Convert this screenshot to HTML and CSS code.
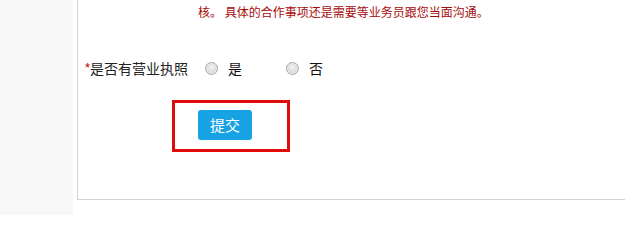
FILE: index.html
```html
<!DOCTYPE html>
<html lang="zh-CN">
<head>
<meta charset="utf-8">
<title>提交</title>
<link rel="stylesheet" href="styles.css">
</head>
<body>
<div class="page">
  <div class="sidebar"></div>
  <div class="main">
    <div class="panel">
      <p class="notice">核。 具体的合作事项还是需要等业务员跟您当面沟通。</p>
      <div class="field">
        <span class="req">*</span><span class="label">是否有营业执照</span>
        <label class="opt opt-first"><span class="radio"></span><span class="opt-text">是</span></label>
        <label class="opt opt-second"><span class="radio"></span><span class="opt-text">否</span></label>
      </div>
      <div class="highlight">
        <button class="submit" type="button">提交</button>
      </div>
    </div>
  </div>
</div>
</body>
</html>
```
FILE: styles.css
```css
html, body {
  margin: 0;
  padding: 0;
  background: #ffffff;
}
body {
  font-family: "Noto Sans CJK SC", "Liberation Sans", sans-serif;
  color: #222222;
}
.page {
  display: flex;
  width: 625px;
  height: 215px;
  overflow: hidden;
}
.sidebar {
  width: 73px;
  flex: none;
  background: #f8f8f8;
}
.main {
  flex: 1;
  padding-left: 4px;
  background: #ffffff;
}
.panel {
  height: 200px;
  box-sizing: border-box;
  border-left: 1px solid #d2d2d2;
  border-bottom: 1px solid #d2d2d2;
  padding-top: 4px;
}
.notice {
  margin: 0 0 0 120px;
  font-size: 12px;
  line-height: 16px;
  height: 16px;
  color: #a50b0b;
  white-space: nowrap;
}
.field {
  display: flex;
  align-items: center;
  height: 24px;
  margin-top: 36px;
  margin-left: 7px;
  font-size: 14px;
  line-height: 24px;
}
.req {
  font-family: "Liberation Sans", sans-serif;
  color: #c40000;
  font-size: 13px;
  line-height: 13px;
  align-self: flex-start;
  margin-top: 5px;
  width: 5px;
}
.label {
  color: #222222;
}
.opt {
  display: flex;
  align-items: center;
}
.opt-first {
  margin-left: 17px;
}
.opt-second {
  margin-left: 44px;
}
.radio {
  width: 11px;
  height: 11px;
  border-radius: 50%;
  border: 1px solid #a8a8a8;
  background: radial-gradient(circle at 50% 40%, #f4f4f4 0%, #dcdcdc 55%, #c4c4c4 100%);
  box-shadow: inset 0 0 0 1px #ececec;
  margin-top: 1px;
}
.opt-text {
  margin-left: 10px;
  color: #111111;
}
.highlight {
  display: inline-block;
  margin-top: 20px;
  margin-left: 94px;
  border: 3px solid #e00c0c;
  padding: 7px 35px 9px 23px;
}
.submit {
  display: block;
  width: 54px;
  height: 30px;
  margin: 0;
  padding: 0;
  border: none;
  border-radius: 3px;
  background: #16a2e3;
  color: #ffffff;
  font-family: "Noto Sans CJK SC", sans-serif;
  font-size: 15px;
  line-height: 30px;
  text-align: center;
}
```
